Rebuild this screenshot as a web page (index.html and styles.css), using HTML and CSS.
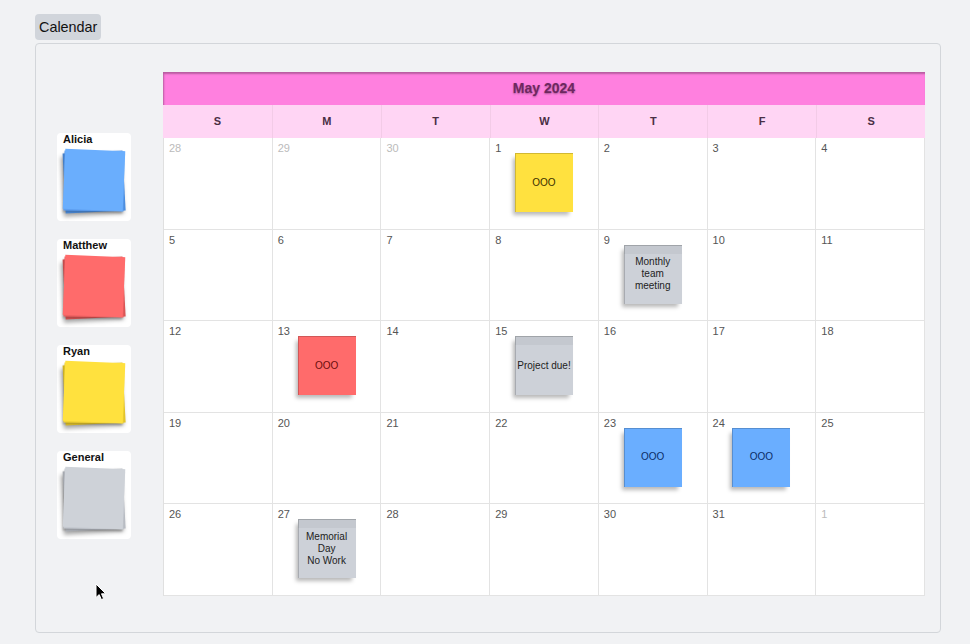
FILE: index.html
```html
<!DOCTYPE html>
<html>
<head>
<meta charset="utf-8">
<link rel="stylesheet" href="styles.css">
</head>
<body>
<div class="page">
  <div class="tab">Calendar</div>
  <div class="panel">
    <div class="sidebar">
      <div class="card"><div class="card-label">Alicia</div><div class="stack blue"><span class="layer l1"></span><span class="layer l2"></span><span class="layer l3"></span></div></div>
      <div class="card"><div class="card-label">Matthew</div><div class="stack red"><span class="layer l1"></span><span class="layer l2"></span><span class="layer l3"></span></div></div>
      <div class="card"><div class="card-label">Ryan</div><div class="stack yellow"><span class="layer l1"></span><span class="layer l2"></span><span class="layer l3"></span></div></div>
      <div class="card"><div class="card-label">General</div><div class="stack gray"><span class="layer l1"></span><span class="layer l2"></span><span class="layer l3"></span></div></div>
    </div>
    <div class="calendar">
      <div class="month">May 2024</div>
      <div class="weekdays">
        <div class="wd">S</div><div class="wd">M</div><div class="wd">T</div><div class="wd">W</div><div class="wd">T</div><div class="wd">F</div><div class="wd">S</div>
      </div>
      <div class="days">
        <div class="cell"><span class="num muted">28</span></div>
        <div class="cell"><span class="num muted">29</span></div>
        <div class="cell"><span class="num muted">30</span></div>
        <div class="cell"><span class="num">1</span><div class="note n-yellow">OOO</div></div>
        <div class="cell"><span class="num">2</span></div>
        <div class="cell"><span class="num">3</span></div>
        <div class="cell"><span class="num">4</span></div>

        <div class="cell"><span class="num">5</span></div>
        <div class="cell"><span class="num">6</span></div>
        <div class="cell"><span class="num">7</span></div>
        <div class="cell"><span class="num">8</span></div>
        <div class="cell"><span class="num">9</span><div class="note n-gray">Monthly<br>team<br>meeting</div></div>
        <div class="cell"><span class="num">10</span></div>
        <div class="cell"><span class="num">11</span></div>

        <div class="cell"><span class="num">12</span></div>
        <div class="cell"><span class="num">13</span><div class="note n-red">OOO</div></div>
        <div class="cell"><span class="num">14</span></div>
        <div class="cell"><span class="num">15</span><div class="note n-gray">Project due!</div></div>
        <div class="cell"><span class="num">16</span></div>
        <div class="cell"><span class="num">17</span></div>
        <div class="cell"><span class="num">18</span></div>

        <div class="cell"><span class="num">19</span></div>
        <div class="cell"><span class="num">20</span></div>
        <div class="cell"><span class="num">21</span></div>
        <div class="cell"><span class="num">22</span></div>
        <div class="cell"><span class="num">23</span><div class="note n-blue">OOO</div></div>
        <div class="cell"><span class="num">24</span><div class="note n-blue">OOO</div></div>
        <div class="cell"><span class="num">25</span></div>

        <div class="cell"><span class="num">26</span></div>
        <div class="cell"><span class="num">27</span><div class="note n-gray">Memorial<br>Day<br>No Work</div></div>
        <div class="cell"><span class="num">28</span></div>
        <div class="cell"><span class="num">29</span></div>
        <div class="cell"><span class="num">30</span></div>
        <div class="cell"><span class="num">31</span></div>
        <div class="cell"><span class="num muted">1</span></div>
      </div>
    </div>
  </div>
  <svg class="cursor" width="12" height="18" viewBox="0 0 12 18"><path d="M1 1 L1 14.5 L4.2 11.6 L6.4 16.6 L8.6 15.6 L6.5 10.8 L10.8 10.8 Z" fill="#000" stroke="#fff" stroke-width="1"/></svg>
</div>
</body>
</html>
```

FILE: styles.css
```css
html, body {
  margin: 0;
  padding: 0;
  background: #f1f2f4;
  font-family: "Liberation Sans", Arial, sans-serif;
}
.page {
  position: relative;
  width: 970px;
  height: 644px;
  box-sizing: border-box;
  padding: 14px 29px 0 35px;
}
.tab {
  display: inline-block;
  background: #d1d5db;
  border-radius: 4px;
  height: 26px;
  line-height: 26px;
  padding: 0 4px 0 4px;
  font-size: 14.4px;
  color: #111;
}
.panel {
  margin-top: 3px;
  height: 590px;
  box-sizing: border-box;
  border: 1px solid #d3d6da;
  border-radius: 4px;
  display: flex;
  align-items: flex-start;
  padding: 28px 15px 0 21px;
}
.sidebar {
  width: 74px;
  margin-right: 32px;
  margin-top: 61px;
  display: flex;
  flex-direction: column;
  gap: 18px;
}
.card {
  background: #fff;
  border-radius: 4px;
  height: 88px;
  box-sizing: border-box;
  padding: 0 5px 0 6px;
}
.card-label {
  font-size: 11px;
  font-weight: bold;
  line-height: 13px;
  color: #111;
}
.stack {
  position: relative;
  width: 62px;
  height: 64px;
  margin-top: 3px;
}
.layer {
  position: absolute;
  left: 1px;
  top: 1px;
  width: 60px;
  height: 60px;
}
.layer.l1 { transform: rotate(-3deg) translate(0, 2px); box-shadow: -2px 3px 4px rgba(0,0,0,.35); }
.layer.l2 { transform: rotate(1deg) translate(0, 1px); box-shadow: -1px 2px 2px rgba(0,0,0,.2); }
.layer.l3 { transform: rotate(2.5deg); }
.blue .l1 { background: #4e8fe0; }
.blue .l2 { background: #5d9ef0; }
.blue .l3 { background: #6aaefd; }
.red .l1 { background: #dc5656; }
.red .l2 { background: #ee6262; }
.red .l3 { background: #ff6b6b; }
.yellow .l1 { background: #e4c52c; }
.yellow .l2 { background: #f2d436; }
.yellow .l3 { background: #ffe13e; }
.gray .l1 { background: #b9bdc4; }
.gray .l2 { background: #c4c8cf; }
.gray .l3 { background: #ced2d8; }

.calendar {
  width: 762px;
  flex: none;
}
.month {
  height: 33px;
  background: #ff80df;
  box-shadow: inset 1px 2px 2px rgba(0,0,0,.28);
  text-align: center;
  font-size: 14px;
  font-weight: bold;
  line-height: 33px;
  color: #6e2760;
  text-shadow: 0 1px 2px rgba(0,0,0,.35);
}
.weekdays {
  display: grid;
  grid-template-columns: repeat(7, 1fr);
  background: #ffd5f4;
  height: 33px;
}
.wd {
  text-align: center;
  line-height: 33px;
  font-size: 11px;
  font-weight: bold;
  color: #4a2e44;
  border-left: 1px solid #f3cbe7;
}
.wd:first-child { border-left: none; }
.days {
  display: grid;
  grid-template-columns: repeat(7, 1fr);
  grid-template-rows: repeat(5, 1fr);
  height: 458px;
  border-left: 1px solid #e0e0e0;
  box-sizing: border-box;
}
.cell {
  background: #fff;
  border-right: 1px solid #e3e3e3;
  border-bottom: 1px solid #e3e3e3;
  padding: 4px 5px 0;
  display: flex;
  flex-direction: column;
  min-width: 0;
}
.num {
  font-size: 11px;
  line-height: 13px;
  color: #555;
}
.num.muted { color: #bbb; }
.note {
  width: 58px;
  height: 59px;
  margin: -2px auto 0;
  display: flex;
  align-items: center;
  justify-content: center;
  text-align: center;
  font-size: 10px;
  line-height: 12px;
  box-shadow: inset 1px 1px 0 rgba(0,0,0,.18), -3px 4px 4px -1px rgba(0,0,0,.28);
}
.n-yellow { background: #ffe13f; color: #3a2e00; }
.n-red { background: #ff6b6b; color: #6a0d0d; }
.n-blue { background: #6aaeff; color: #0a2c66; }
.n-gray {
  background: linear-gradient(#c4c8cf 0, #c4c8cf 9px, #cdd1d8 9px);
  color: #222;
}
.cursor {
  position: absolute;
  left: 95px;
  top: 583px;
}
```
